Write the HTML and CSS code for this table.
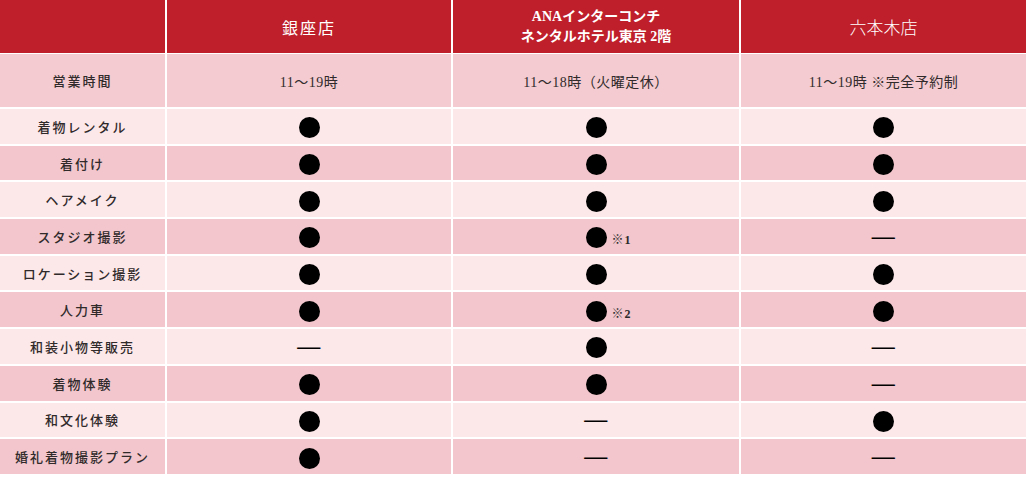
FILE: index.html
```html
<!DOCTYPE html>
<html lang="ja">
<head>
<meta charset="utf-8">
<title>店舗比較表</title>
<link rel="stylesheet" href="styles.css">
</head>
<body>
<div class="table">
  <div class="cell head"></div>
  <div class="cell head ginza">銀座店</div>
  <div class="cell head ana">ANAインターコンチ<br>ネンタルホテル東京 2階</div>
  <div class="cell head roppongi">六本木店</div>

  <div class="cell hours label">営業時間</div>
  <div class="cell hours">11〜19時</div>
  <div class="cell hours">11〜18時（火曜定休）</div>
  <div class="cell hours">11〜19時 ※完全予約制</div>

  <div class="cell light label">着物レンタル</div>
  <div class="cell light"><span class="dot"></span></div>
  <div class="cell light"><span class="dot"></span></div>
  <div class="cell light"><span class="dot"></span></div>

  <div class="cell dark label">着付け</div>
  <div class="cell dark"><span class="dot"></span></div>
  <div class="cell dark"><span class="dot"></span></div>
  <div class="cell dark"><span class="dot"></span></div>

  <div class="cell light label">ヘアメイク</div>
  <div class="cell light"><span class="dot"></span></div>
  <div class="cell light"><span class="dot"></span></div>
  <div class="cell light"><span class="dot"></span></div>

  <div class="cell dark label">スタジオ撮影</div>
  <div class="cell dark"><span class="dot"></span></div>
  <div class="cell dark"><span class="dot"><span class="note">※1</span></span></div>
  <div class="cell dark"><span class="dash">—</span></div>

  <div class="cell light label">ロケーション撮影</div>
  <div class="cell light"><span class="dot"></span></div>
  <div class="cell light"><span class="dot"></span></div>
  <div class="cell light"><span class="dot"></span></div>

  <div class="cell dark label">人力車</div>
  <div class="cell dark"><span class="dot"></span></div>
  <div class="cell dark"><span class="dot"><span class="note">※2</span></span></div>
  <div class="cell dark"><span class="dot"></span></div>

  <div class="cell light label">和装小物等販売</div>
  <div class="cell light"><span class="dash">—</span></div>
  <div class="cell light"><span class="dot"></span></div>
  <div class="cell light"><span class="dash">—</span></div>

  <div class="cell dark label">着物体験</div>
  <div class="cell dark"><span class="dot"></span></div>
  <div class="cell dark"><span class="dot"></span></div>
  <div class="cell dark"><span class="dash">—</span></div>

  <div class="cell light label">和文化体験</div>
  <div class="cell light"><span class="dot"></span></div>
  <div class="cell light"><span class="dash">—</span></div>
  <div class="cell light"><span class="dot"></span></div>

  <div class="cell dark label">婚礼着物撮影プラン</div>
  <div class="cell dark"><span class="dot"></span></div>
  <div class="cell dark"><span class="dash">—</span></div>
  <div class="cell dark"><span class="dash">—</span></div>
</div>
</body>
</html>
```

FILE: styles.css
```css
html, body {
  margin: 0;
  padding: 0;
  background: #ffffff;
}

body {
  font-family: "Liberation Serif", "Noto Sans CJK JP", serif;
  color: #302a2b;
}

.table {
  width: 1026px;
  display: grid;
  grid-template-columns: 165px 284px 286px 285px;
  grid-template-rows: 52px 53px;
  grid-auto-rows: 34.7px;
  column-gap: 2px;
  row-gap: 2px;
  background: #ffffff;
}

.cell {
  display: flex;
  align-items: center;
  justify-content: center;
  text-align: center;
  font-size: 14px;
  letter-spacing: 0.5px;
}

.head {
  background: #bf1f2b;
  color: #ffffff;
  margin-bottom: -1px;
}

.ginza {
  font-size: 16px;
  letter-spacing: 2px;
  font-weight: 400;
}

.ana {
  font-size: 14px;
  font-weight: 700;
  line-height: 20px;
  letter-spacing: 0;
}

.roppongi {
  font-size: 17px;
  font-weight: 300;
  letter-spacing: 0;
}

.hours {
  background: #f3cbd0;
}

.light {
  background: #fce7e9;
}

.dark {
  background: #f2c6cc;
}

.label {
  font-size: 13px;
  letter-spacing: 2px;
  font-weight: 500;
}

.dot {
  position: relative;
  display: inline-block;
  width: 21px;
  height: 21px;
  border-radius: 50%;
  background: #000000;
  margin-top: 3px;
}

.note {
  position: absolute;
  left: 26px;
  top: 3px;
  font-size: 12px;
  font-weight: 700;
  white-space: nowrap;
  color: #2a2a2a;
  letter-spacing: 1px;
}

.dash {
  font-size: 23px;
  font-weight: 700;
  line-height: 1;
  color: #000000;
}
```
